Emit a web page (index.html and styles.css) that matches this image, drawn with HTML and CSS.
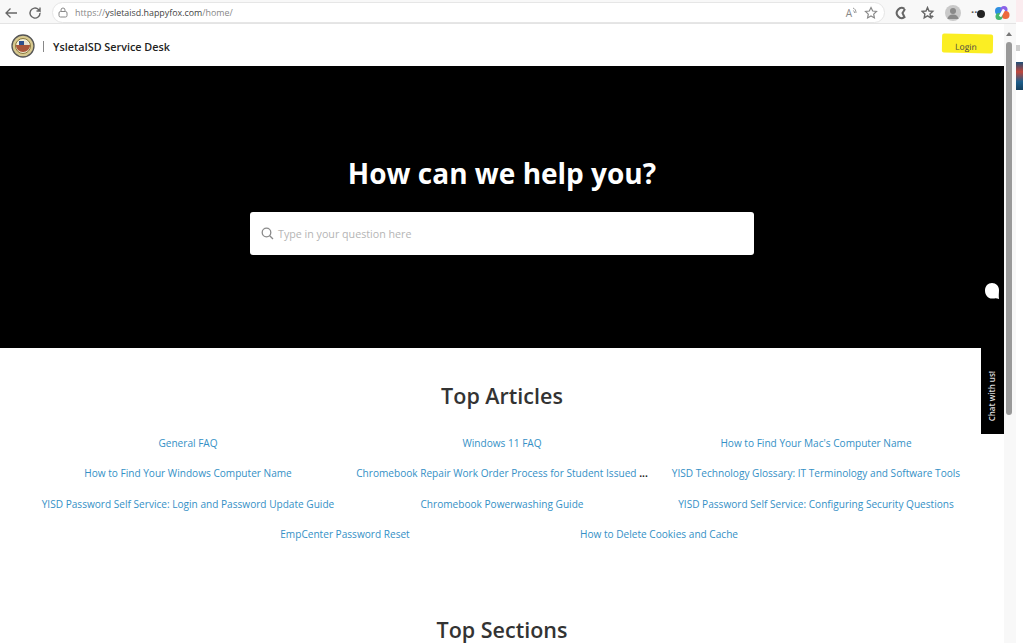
FILE: index.html
```html
<!DOCTYPE html>
<html lang="en">
<head>
  <meta charset="UTF-8">
  <title>YsletaISD Service Desk</title>
  <link rel="stylesheet" href="styles.css">
</head>
<body>
  <div class="screen">
    <div class="browser">
      <div class="browser-bar">
        <svg class="tool-icon" width="16" height="16" viewBox="0 0 16 16"><path d="M14 8H3M7.500 3.500 3 8l4.500 4.500" fill="none" stroke="#666" stroke-width="1.300"/></svg>
        <svg class="tool-icon" width="16" height="16" viewBox="0 0 16 16"><path d="M13 8a5 5 0 1 1-1.500-3.500L13 6V2.500M13 6H9.500" fill="none" stroke="#666" stroke-width="1.400"/></svg>
        <div class="address">
          <svg width="10" height="11" viewBox="0 0 10 11"><rect x="1" y="4.500" width="8" height="5.500" rx="1.500" fill="none" stroke="#888"/><path d="M3 4.500V3a2 2 0 0 1 4 0v1.500" fill="none" stroke="#888"/></svg>
          <span class="url"><span class="url-dim">https://</span>ysletaisd.happyfox.com<span class="url-dim">/home/</span></span>
          <span class="read-aloud">A<svg width="5" height="7" viewBox="0 0 5 7"><path d="M1 1c2 1 3 2 3 5M1 3.500c1 .5 1.500 1 1.500 2.500" fill="none" stroke="#999"/></svg></span>
          <svg width="14" height="14" viewBox="0 0 14 14"><path d="M7 1.500 8.700 5l3.800.5-2.800 2.600.7 3.800L7 10l-3.400 1.900.7-3.800L1.500 5.500 5.300 5z" fill="none" stroke="#888" stroke-width="1.200"/></svg>
        </div>
        <div class="tools">
          <svg width="14" height="14" viewBox="0 0 14 14"><path d="M10.500 2.800a5 5 0 1 0 0 8.400L8.500 7l2.500-4" fill="none" stroke="#666" stroke-width="2"/></svg>
          <svg class="collections" width="14" height="14" viewBox="0 0 14 14"><path d="M6.500 1.500 8 5l3.800.4-2.800 2.600.8 3.800-3.300-1.900-3.300 1.900.7-3.800L1.200 5.400 5 5z" fill="none" stroke="#666" stroke-width="1.400"/><path d="M11 9v3M9.500 10.500h3" stroke="#666"/></svg>
          <svg width="16" height="16" viewBox="0 0 16 16"><circle cx="8" cy="8" r="8" fill="#c9c9c9"/><circle cx="8" cy="6" r="3" fill="#8a8a8a"/><path d="M2.500 14a5.500 4.500 0 0 1 11 0z" fill="#8a8a8a"/></svg>
          <span class="more">··<span class="more-badge"></span></span>
          <svg width="16" height="16" viewBox="0 0 16 16"><circle cx="5" cy="6" r="4" fill="#2f8fe0"/><circle cx="10" cy="4.500" r="3.500" fill="#8a62e8"/><circle cx="11.500" cy="10" r="4" fill="#ee6a3c"/><circle cx="5" cy="11.500" r="3.500" fill="#45b86e"/><path d="M10 4.500 6 11.500" stroke="#fff" stroke-width="2.600"/></svg>
        </div>
      </div>

      <div class="window">
        <main class="page">
          <header class="site-header">
            <svg class="logo" width="24" height="24" viewBox="0 0 24 24"><circle cx="12" cy="12" r="11" fill="#d8c98f" stroke="#555" stroke-width="1.300"/><circle cx="12" cy="12" r="7.500" fill="#f3eed8" stroke="#8a7a3d"/><path d="M5 11h14c0 4-3 7-7 7s-7-3-7-7z" fill="#a8553a"/><path d="M8 7h5v4H8z" fill="#2d4f8e"/><path d="M13 7h3l2 4h-5z" fill="#e8e2d0"/></svg>
            <span class="divider"></span>
            <span class="brand">YsletaISD Service Desk</span>
            <a class="login">Login</a>
          </header>

          <section class="hero">
            <h1>How can we help you?</h1>
            <div class="search">
              <svg width="13" height="13" viewBox="0 0 13 13"><circle cx="5.500" cy="5.500" r="4.300" fill="none" stroke="#8a8a8a" stroke-width="1.300"/><path d="m8.700 8.700 3.300 3.300" stroke="#8a8a8a" stroke-width="1.300"/></svg>
              <span>Type in your question here</span>
            </div>
          </section>

          <section class="articles">
            <h2>Top Articles</h2>
            <div class="article-grid">
              <a>General FAQ</a>
              <a>Windows 11 FAQ</a>
              <a>How to Find Your Mac's Computer Name</a>
              <a>How to Find Your Windows Computer Name</a>
              <a>Chromebook Repair Work Order Process for Student Issued <b>...</b></a>
              <a>YISD Technology Glossary: IT Terminology and Software Tools</a>
              <a>YISD Password Self Service: Login and Password Update Guide</a>
              <a>Chromebook Powerwashing Guide</a>
              <a>YISD Password Self Service: Configuring Security Questions</a>
            </div>
            <div class="article-row-last">
              <a>EmpCenter Password Reset</a>
              <a>How to Delete Cookies and Cache</a>
            </div>
          </section>

          <section class="sections">
            <h2>Top Sections</h2>
          </section>

          <div class="chat-tab">
            <svg width="16" height="18" viewBox="0 0 16 18"><path d="M8 1c4 0 7 3 7 7 0 3-.5 5.500 0 9-1.800-.6-3-.9-4.500-.6-.8.200-1.600.2-2.500.2-4 0-7-3.600-7-8.100C1 4 4 1 8 1z" fill="#fff"/></svg>
            <span>Chat with us!</span>
          </div>
        </main>
        <aside class="scrollbar">
          <span class="scroll-up"></span>
          <span class="scroll-thumb"></span>
        </aside>
      </div>
    </div>

    <div class="desktop-edge">
      <div class="edge-tab"></div>
      <div class="edge-smudge"></div>
      <div class="edge-thumb"></div>
    </div>
  </div>
</body>
</html>
```

FILE: styles.css
```css
html, body {
  margin: 0;
  height: 643px;
  overflow: hidden;
  background: #fff;
  font-family: "Open Sans", "Noto Sans", sans-serif;
}
.screen {
  display: flex;
  height: 643px;
}
.browser {
  width: 1016px;
}
.browser-bar {
  height: 24px;
  box-sizing: border-box;
  display: flex;
  align-items: center;
  padding: 2px 0 0 3px;
  background: #f8f8f8;
  border-bottom: 1px solid #e4e4e4;
}
.tool-icon {
  margin-right: 8px;
}
.address {
  width: 833px;
  height: 21px;
  margin-left: 1px;
  box-sizing: border-box;
  display: flex;
  align-items: center;
  gap: 7px;
  padding: 0 6px 0 5px;
  background: #fff;
  border: 1px solid #e6e6e6;
  border-radius: 11px;
}
.url {
  flex: 1;
  font-size: 8.900px;
  color: #444;
}
.url-dim {
  color: #888;
}
.read-aloud {
  display: flex;
  align-items: flex-start;
  font-size: 10px;
  line-height: 12px;
  color: #888;
}
.tools {
  display: flex;
  align-items: center;
  gap: 10px;
  margin-left: 9px;
}
.collections {
  margin-left: 3px;
}
.more {
  position: relative;
  width: 13px;
  height: 10px;
  font-size: 11px;
  font-weight: 700;
  line-height: 8px;
  color: #555;
}
.more-badge {
  position: absolute;
  top: 2px;
  left: 6px;
  width: 8px;
  height: 8px;
  border-radius: 50%;
  background: #222;
}
.window {
  display: flex;
  height: 619px;
}
.page {
  position: relative;
  width: 1004px;
  overflow: hidden;
}
.site-header {
  height: 42px;
  box-sizing: border-box;
  display: flex;
  align-items: center;
  padding: 2px 11px 0 11px;
}
.divider {
  width: 1px;
  height: 11px;
  margin: 0 9px 0 8px;
  background: #888;
}
.brand {
  font-size: 10.800px;
  font-weight: 600;
  color: #222;
}
.login {
  margin: 0 0 6px auto;
  width: 51px;
  padding: 8px 3px 1px 0;
  box-sizing: border-box;
  font-size: 8.500px;
  line-height: 10px;
  text-align: center;
  color: #444;
  background: #fbee23;
  border-radius: 2px;
  transform: rotate(1deg);
}
.hero {
  height: 282px;
  box-sizing: border-box;
  padding-top: 87px;
  background: #000;
  text-align: center;
}
h1 {
  margin: 0;
  font-size: 28px;
  line-height: 40px;
  font-weight: 700;
  color: #fff;
}
.search {
  width: 504px;
  height: 43px;
  margin: 19px auto 0;
  box-sizing: border-box;
  display: flex;
  align-items: center;
  gap: 4px;
  padding-left: 11px;
  background: #fff;
  border-radius: 3px;
  font-size: 10.700px;
  color: #b5b5b5;
}
h2 {
  margin: 0;
  font-size: 21.500px;
  line-height: 30px;
  font-weight: 600;
  text-align: center;
  color: #333;
}
.articles {
  padding-top: 33px;
}
.article-grid {
  display: grid;
  grid-template-columns: repeat(3, 314px);
  grid-auto-rows: 30.300px;
  margin-top: 17px;
  padding: 0 31px;
}
.article-grid a,
.article-row-last a {
  font-size: 10.100px;
  line-height: 30px;
  text-align: center;
  white-space: nowrap;
  color: #3490c6;
}
.article-grid b {
  color: #222;
}
.article-row-last {
  display: grid;
  grid-template-columns: repeat(2, 314px);
  padding: 0 188px;
}
.sections {
  padding-top: 66px;
}
.chat-tab {
  position: absolute;
  top: 250px;
  right: 0;
  width: 23px;
  height: 160px;
  box-sizing: border-box;
  display: flex;
  flex-direction: column;
  align-items: center;
  justify-content: space-between;
  padding: 8px 2px 13px 0;
  background: #000;
}
.chat-tab span {
  writing-mode: vertical-rl;
  transform: rotate(180deg);
  font-size: 8px;
  font-weight: 600;
  color: #ddd;
}
.scrollbar {
  width: 12px;
  background: #f8f8f8;
}
.scroll-up {
  display: block;
  width: 0;
  margin: 8px 0 0 2px;
  border-left: 3px solid transparent;
  border-right: 3px solid transparent;
  border-bottom: 4px solid #777;
}
.scroll-thumb {
  display: block;
  width: 6px;
  height: 373px;
  margin: 6px 0 0 2px;
  background: #999;
  border-radius: 3px;
}
.desktop-edge {
  flex: 1;
  background: #fff;
}
.edge-tab {
  height: 22px;
  background: #fbecef;
}
.edge-smudge {
  width: 4px;
  height: 6px;
  margin-top: 23px;
  background: #ccc;
}
.edge-thumb {
  height: 28px;
  margin-top: 11px;
  background: linear-gradient(to bottom, #1f4f78, #c0473c 35%, #1f5f8c 70%, #16405f);
}
```
